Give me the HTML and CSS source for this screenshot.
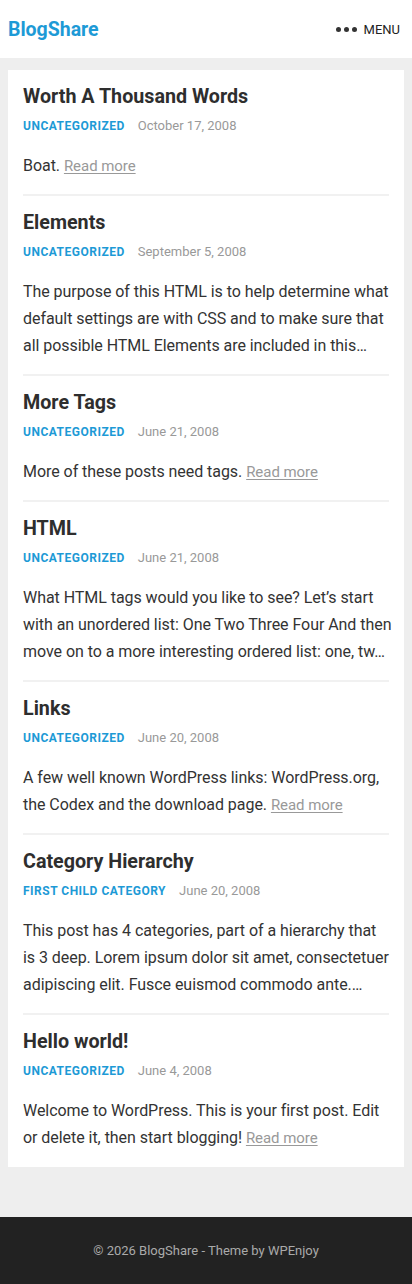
FILE: index.html
```html
<!DOCTYPE html>
<html lang="en">
<head>
<meta charset="utf-8">
<meta name="viewport" content="width=device-width, initial-scale=1">
<title>BlogShare</title>
<link rel="stylesheet" href="styles.css">
</head>
<body>
<header class="site-header">
  <a class="logo" href="#">BlogShare</a>
  <button class="menu-toggle" type="button">
    <span class="dots"><i></i><i></i><i></i></span>
    <span class="menu-label">MENU</span>
  </button>
</header>

<main class="content">
  <article class="post">
    <h2 class="post-title">Worth A Thousand Words</h2>
    <div class="post-meta"><a class="cat" href="#">Uncategorized</a><span class="date">October 17, 2008</span></div>
    <p class="excerpt">Boat. <a class="more" href="#">Read more</a></p>
  </article>
  <article class="post">
    <h2 class="post-title">Elements</h2>
    <div class="post-meta"><a class="cat" href="#">Uncategorized</a><span class="date">September 5, 2008</span></div>
    <p class="excerpt">The purpose of this HTML is to help determine what<br>default settings are with CSS and to make sure that<br>all possible HTML Elements are included in this…</p>
  </article>
  <article class="post">
    <h2 class="post-title">More Tags</h2>
    <div class="post-meta"><a class="cat" href="#">Uncategorized</a><span class="date">June 21, 2008</span></div>
    <p class="excerpt">More of these posts need tags. <a class="more" href="#">Read more</a></p>
  </article>
  <article class="post">
    <h2 class="post-title">HTML</h2>
    <div class="post-meta"><a class="cat" href="#">Uncategorized</a><span class="date">June 21, 2008</span></div>
    <p class="excerpt">What HTML tags would you like to see? Let’s start<br>with an unordered list: One Two Three Four And then<br>move on to a more interesting ordered list: one, tw…</p>
  </article>
  <article class="post">
    <h2 class="post-title">Links</h2>
    <div class="post-meta"><a class="cat" href="#">Uncategorized</a><span class="date">June 20, 2008</span></div>
    <p class="excerpt">A few well known WordPress links: WordPress.org,<br>the Codex and the download page. <a class="more" href="#">Read more</a></p>
  </article>
  <article class="post">
    <h2 class="post-title">Category Hierarchy</h2>
    <div class="post-meta"><a class="cat" href="#">First Child Category</a><span class="date">June 20, 2008</span></div>
    <p class="excerpt">This post has 4 categories, part of a hierarchy that<br>is 3 deep. Lorem ipsum dolor sit amet, consectetuer<br>adipiscing elit. Fusce euismod commodo ante.…</p>
  </article>
  <article class="post">
    <h2 class="post-title">Hello world!</h2>
    <div class="post-meta"><a class="cat" href="#">Uncategorized</a><span class="date">June 4, 2008</span></div>
    <p class="excerpt">Welcome to WordPress. This is your first post. Edit<br>or delete it, then start blogging! <a class="more" href="#">Read more</a></p>
  </article>
</main>

<footer class="site-footer">
  <p>© 2026 <a href="#">BlogShare</a> - Theme by <a href="#">WPEnjoy</a></p>
</footer>
</body>
</html>
```

FILE: styles.css
```css
* { box-sizing: border-box; }

html, body {
  margin: 0;
  padding: 0;
}

body {
  background: #eeeeee;
  font-family: Roboto, "Liberation Sans", Arial, sans-serif;
  color: #333;
  -webkit-font-smoothing: antialiased;
}

a { text-decoration: none; }

.site-header {
  height: 58px;
  background: #fff;
  display: flex;
  align-items: center;
  justify-content: space-between;
  padding: 0 12px 0 8px;
}

.logo {
  color: #1d9ad6;
  font-size: 19.5px;
  font-weight: 700;
}

.menu-toggle {
  display: flex;
  align-items: center;
  gap: 7px;
  background: none;
  border: 0;
  padding: 0;
  font-family: inherit;
  color: #222;
  cursor: pointer;
}

.dots {
  display: flex;
  gap: 3px;
}

.dots i {
  display: block;
  width: 5px;
  height: 5px;
  border-radius: 50%;
  background: #333;
}

.menu-label {
  font-size: 13px;
}

.content {
  background: #fff;
  margin: 12px 8px 50px;
  padding: 0 15px;
}

.post {
  padding: 14px 0 15px;
  border-bottom: 2px solid #f1f1f1;
}

.post:last-child {
  border-bottom: 0;
  padding-bottom: 16px;
}

.post-title {
  margin: 0 0 8px;
  font-size: 19.7px;
  line-height: 25px;
  font-weight: 700;
  color: #2e2e2e;
}

.post-meta {
  display: flex;
  gap: 13px;
  font-size: 12px;
  line-height: 18px;
  margin-bottom: 17px;
}

.cat {
  color: #1d9ad6;
  font-weight: 700;
  text-transform: uppercase;
  letter-spacing: 0.5px;
}

.date {
  color: #999;
  font-size: 13px;
}

.excerpt {
  margin: 0;
  font-size: 16px;
  line-height: 27px;
  letter-spacing: -0.05px;
  white-space: nowrap;
  color: #333;
}

.more {
  color: #999;
  font-size: 15px;
  line-height: 1;
  text-decoration: underline;
  text-underline-offset: 2px;
}

.site-footer {
  background: #222;
  height: 67px;
  display: flex;
  align-items: center;
  justify-content: center;
}

.site-footer p {
  margin: 0;
  font-size: 13px;
  color: #aaa;
}

.site-footer a {
  color: #aaa;
}
```
